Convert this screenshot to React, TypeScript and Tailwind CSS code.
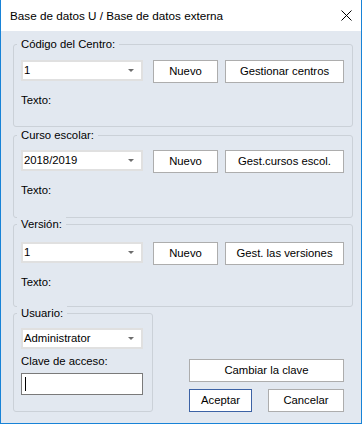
import React from 'react';

const font = { fontFamily: '"Liberation Sans", Arial, sans-serif' };

const Combo = ({ value }: { value: string }) => (
  <div className="w-[122px] h-[21px] bg-white border-2 border-[#e0e0e0] flex items-center justify-between pl-[1px] pr-[7px]">
    <span className="leading-none">{value}</span>
    <svg width="6" height="3" viewBox="0 0 6 3">
      <path d="M0 0 H6 L3 3 Z" fill="#6d6d6d" />
    </svg>
  </div>
);

const Btn = ({ label, width, primary }: { label: string; width: string; primary?: boolean }) => (
  <button
    className={`${width} h-[23px] bg-white border ${primary ? 'border-[#3c62a5]' : 'border-[#adadad]'} flex items-center justify-center leading-none`}
  >
    {label}
  </button>
);

const Group = ({
  label,
  className,
  children,
}: {
  label: string;
  className: string;
  children: React.ReactNode;
}) => (
  <div className={`relative border border-[#cbd1d8] rounded-[3px] px-[7px] ${className}`}>
    <span className="absolute left-[3px] -top-[9px] px-[4px] bg-[#e2e8f0] leading-[16px]">{label}</span>
    {children}
  </div>
);

const Section = ({
  label,
  combo,
  action,
  className,
}: {
  label: string;
  combo: string;
  action: string;
  className: string;
}) => (
  <Group label={label} className={`h-[83px] ${className}`}>
    <div className="flex items-start">
      <Combo value={combo} />
      <div className="ml-[10px]">
        <Btn label="Nuevo" width="w-[65px]" />
      </div>
      <div className="ml-[7px]">
        <Btn label={action} width="w-[119px]" />
      </div>
    </div>
    <div className="mt-[9px] leading-[16px]">Texto:</div>
  </Group>
);

export default function App() {
  return (
    <div
      style={font}
      className="w-[362px] h-[424px] flex flex-col border-x border-b border-[#1883d7] bg-[#e2e8f0] text-[11.3px] text-black"
    >
      <div className="h-[31px] shrink-0 bg-white flex items-center justify-between pl-[9px] pr-[9px]">
        <span className="text-[11.7px]">Base de datos U / Base de datos externa</span>
        <svg width="11" height="11" viewBox="0 0 11 11">
          <path d="M0.5 0.5 L10.5 10.5 M10.5 0.5 L0.5 10.5" stroke="#000" strokeWidth="1" />
        </svg>
      </div>
      <div className="flex flex-col pl-[12px] pr-[8px] pt-[13px]">
        <Section label="Código del Centro:" combo="1" action="Gestionar centros" className="pt-[15px]" />
        <Section label="Curso escolar:" combo="2018/2019" action="Gest.cursos escol." className="mt-[8px] pt-[14px]" />
        <Section label="Versión:" combo="1" action="Gest. las versiones" className="mt-[6px] pt-[17px]" />
        <div className="flex mt-[6px]">
          <Group label="Usuario:" className="w-[140px] h-[99px] pt-[14px]">
            <Combo value="Administrator" />
            <div className="mt-[4px] leading-[16px]">Clave de acceso:</div>
            <div className="mt-[4px] w-[122px] h-[22px] bg-white border border-[#7a7a7a] flex items-center pl-[3px]">
              <div className="w-[1px] h-[14px] bg-black" />
            </div>
          </Group>
          <div className="flex-1 flex flex-col items-end justify-end pr-[9px]">
            <Btn label="Cambiar la clave" width="w-[155px]" />
            <div className="flex mt-[7px] gap-[16px]">
              <Btn label="Aceptar" width="w-[63px]" primary />
              <Btn label="Cancelar" width="w-[76px]" />
            </div>
          </div>
        </div>
      </div>
    </div>
  );
}
